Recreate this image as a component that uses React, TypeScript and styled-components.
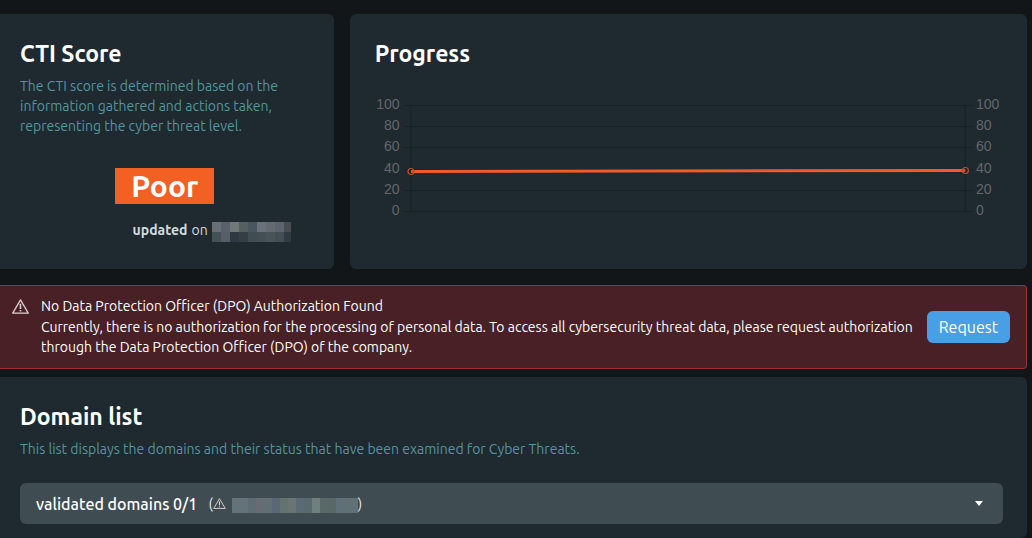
import React from "react";
import styled, { createGlobalStyle } from "styled-components";

const GlobalStyle = createGlobalStyle`
  *, *::before, *::after { box-sizing: border-box; }
  html { background: #121619; }
  body {
    margin: 0;
    background: #121619;
    color: #fff;
    font-family: Ubuntu, Roboto, "Noto Sans", sans-serif;
    font-size: 14px;
    line-height: 20px;
  }
  h1, h2, h3, p { margin: 0; }
  button { font-family: inherit; }
`;

const Page = styled.main`
  display: flex;
  flex-direction: column;
  min-height: 100vh;
  padding: 14px 5px 0 0;
`;

const TopRow = styled.div`
  display: grid;
  grid-template-columns: minmax(0, 33fr) minmax(0, 67fr);
  gap: 16px;
  margin-bottom: 16px;
`;

const Card = styled.section<{ $inset?: number; $grow?: boolean }>`
  flex-grow: ${({ $grow }) => ($grow ? 1 : 0)};
  padding: 24px 24px 14px ${({ $inset = 20 }) => $inset}px;
  background: #1e2930;
  border-radius: ${({ $inset }) => ($inset ? "6px" : "0 6px 6px 0")};
`;

const Title = styled.h2`
  font-size: 23px;
  line-height: 32px;
  font-weight: 700;
`;

const Description = styled.p`
  margin-top: 6px;
  color: #55959f;
`;

const ScoreBlock = styled.div`
  display: flex;
  flex-direction: column;
  align-items: center;
  margin: 32px 0 13px;
`;

const ScoreBadge = styled.strong`
  padding: 0 16px;
  background: #f26024;
  font-size: 30px;
  line-height: 36px;
  font-weight: 700;
`;

const Updated = styled.p`
  display: flex;
  align-self: flex-end;
  align-items: center;
  gap: 4px;
  margin: 14px 19px 0 0;
  color: #d5dadc;
`;

const Chart = styled.div`
  display: flex;
  margin-top: 24px;
  padding-right: 2px;
  color: #666;
  font-family: "Liberation Sans", Arial, sans-serif;
`;

const AxisLabels = styled.div<{ $side: "left" | "right" }>`
  display: flex;
  flex-direction: column;
  justify-content: space-between;
  width: 25px;
  height: 126px;
  text-align: ${({ $side }) => ($side === "left" ? "right" : "left")};
`;

const Plot = styled.svg`
  flex: 1;
  min-width: 0;
  height: 107px;
  margin: 11px 11px 0;
  overflow: visible;
`;

const Alert = styled.section`
  display: flex;
  align-items: center;
  margin-bottom: 8px;
  padding: 10px 16px 11px 12px;
  background: #482025;
  border: 1px solid #9a3034;
  border-left: 0;
  border-radius: 0 4px 4px 0;
`;

const AlertIcon = styled.span`
  display: flex;
  align-self: flex-start;
  flex: none;
  width: 29px;
  padding-top: 3px;
`;

const AlertBody = styled.div`
  flex: 1;
`;

const AlertTitle = styled.h3`
  font-size: 14px;
  line-height: 20px;
  font-weight: 400;
  margin-bottom: 1px;
`;

const RequestButton = styled.button`
  flex: none;
  height: 32px;
  padding: 0 12px;
  border: 0;
  border-radius: 6px;
  background: #489fe5;
  color: #fff;
  font-size: 16px;
  line-height: 32px;
`;

const DomainToggle = styled.button`
  display: flex;
  align-items: center;
  width: 100%;
  height: 41px;
  margin-top: 24px;
  padding: 0 20px 0 16px;
  border: 0;
  border-radius: 6px;
  background: #3f4c51;
  color: #fff;
  font-size: 16px;
  font-weight: 500;
`;

const DomainNote = styled.span`
  display: flex;
  align-items: center;
  margin-left: 11px;
  color: #e8ecee;
  font-size: 14px;
  font-weight: 400;
`;

const Caret = styled.span`
  margin-left: auto;
  border: 4px solid transparent;
  border-top: 5px solid #fff;
  border-bottom: 0;
`;

const MaskSvg = styled.svg<{ $gap?: number }>`
  flex: none;
  margin: 4px 0 0 ${({ $gap = 0 }) => $gap}px;
`;

function WarningIcon({ width, height }: { width: number; height: number }) {
  return (
    <svg width={width} height={height} viewBox="0 0 16 14" fill="none" stroke="#dccfd0" aria-hidden="true">
      <path d="M8 .8 15.3 13.3H.7Z" strokeWidth="1.2" strokeLinejoin="round" />
      <path d="M8 4.3v5M8 10.4v1.4" strokeWidth="1.5" />
    </svg>
  );
}

type MaskProps = { rows: string[][]; cell: number; height: number; width: number; gap?: number };

function Mask({ rows, cell, height, width, gap }: MaskProps) {
  return (
    <MaskSvg $gap={gap} width={width} height={rows.length * height} shapeRendering="crispEdges" aria-hidden="true">
      {rows.map((row, y) =>
        row.map((fill, x) => (
          <rect key={`${x}-${y}`} x={x * cell} y={y * height} width={cell} height={height} fill={fill} />
        ))
      )}
    </MaskSvg>
  );
}

const dateMask = [
  ["#687073", "#59616a", "#70787a", "#565f60", "#48565f", "#69717c", "#626b6e", "#5d646d", "#484d51"],
  ["#445157", "#555e66", "#2f3943", "#353d45", "#404d53", "#424f55", "#475357", "#424d56", "#303a43"],
];

const domainMask = [
  ["#64727a", "#64727a", "#5d6c75", "#666b75", "#616f75", "#596874", "#65736f", "#6b7473",
   "#5a6b74", "#596a6e", "#6f807f", "#596967", "#596767", "#5f707a", "#607075", "#607075"],
];

const ticks = [100, 80, 60, 40, 20, 0];
const yFor = (value: number) => Math.round(106 * (1 - value / 100)) + 0.5;

function ProgressChart() {
  const start = yFor(38);
  const end = yFor(39);
  return (
    <Chart>
      <AxisLabels $side="left">{ticks.map((t) => <span key={t}>{t}</span>)}</AxisLabels>
      <Plot role="img" aria-label="Score progress">
        <g stroke="#172228" strokeWidth="1">
          {ticks.map((t) => (
            <React.Fragment key={t}>
              <line x1="-7" x2="0" y1={yFor(t)} y2={yFor(t)} />
              <line x1="0" x2="100%" y1={yFor(t)} y2={yFor(t)} />
              <svg x="100%" overflow="visible">
                <line x1="0" x2="8" y1={yFor(t)} y2={yFor(t)} />
              </svg>
            </React.Fragment>
          ))}
          <line x1="0" x2="0" y1="0" y2="106" />
          <line x1="100%" x2="100%" y1="0" y2="106" />
        </g>
        <line x1="0" x2="100%" y1={start} y2={end} stroke="#f15a29" strokeWidth="3" />
        <g fill="rgba(0,0,0,0.1)" stroke="#c54d29" strokeWidth="1.2">
          <circle cx="0" cy={start} r="3" />
          <circle cx="100%" cy={end} r="3" />
        </g>
      </Plot>
      <AxisLabels $side="right">{ticks.map((t) => <span key={t}>{t}</span>)}</AxisLabels>
    </Chart>
  );
}

export default function App() {
  return (
    <>
      <GlobalStyle />
      <Page>
        <TopRow>
          <Card>
            <Title>CTI Score</Title>
            <Description>
              The CTI score is determined based on the information gathered and actions taken,
              representing the cyber threat level.
            </Description>
            <ScoreBlock>
              <ScoreBadge>Poor</ScoreBadge>
              <Updated>
                <b>updated</b> on <Mask rows={dateMask} cell={9} height={10} width={79} />
              </Updated>
            </ScoreBlock>
          </Card>
          <Card $inset={25}>
            <Title>Progress</Title>
            <ProgressChart />
          </Card>
        </TopRow>
        <Alert role="alert">
          <AlertIcon><WarningIcon width={17} height={15} /></AlertIcon>
          <AlertBody>
            <AlertTitle>No Data Protection Officer (DPO) Authorization Found</AlertTitle>
            <p>
              Currently, there is no authorization for the processing of personal data. To access all
              cybersecurity threat data, please request authorization through the Data Protection
              Officer (DPO) of the company.
            </p>
          </AlertBody>
          <RequestButton type="button">Request</RequestButton>
        </Alert>
        <Card $grow>
          <Title>Domain list</Title>
          <Description>
            This list displays the domains and their status that have been examined for Cyber Threats.
          </Description>
          <DomainToggle type="button" aria-expanded="false">
            validated domains 0/1
            <DomainNote>
              (<WarningIcon width={13} height={11} />
              <Mask rows={domainMask} cell={8} height={15} width={126} gap={6} />)
            </DomainNote>
            <Caret />
          </DomainToggle>
        </Card>
      </Page>
    </>
  );
}
